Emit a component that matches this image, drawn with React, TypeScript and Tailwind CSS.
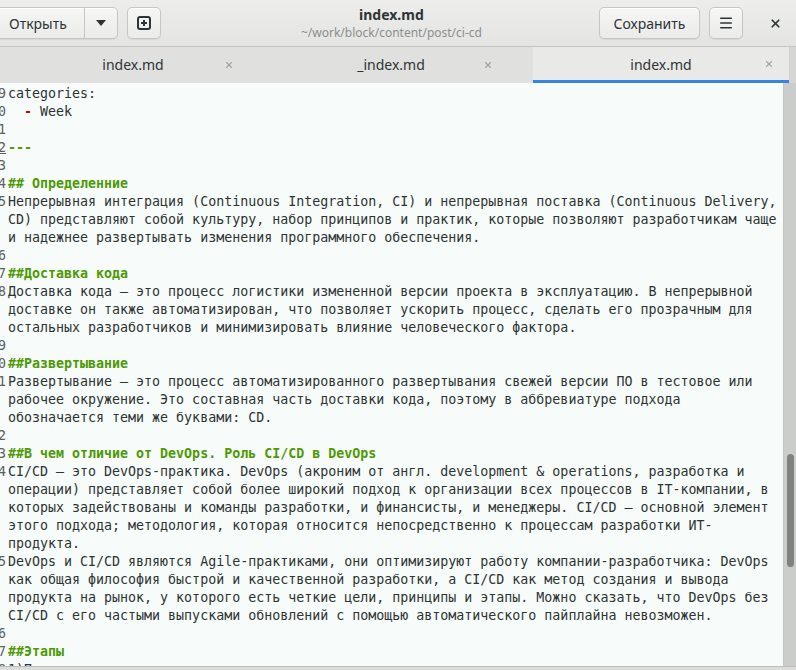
import { X, Menu } from 'lucide-react';

type Kind = 'text' | 'heading' | 'rule' | 'list';

type Line = { n: number; kind: Kind; rows: string[] };

const lines: Line[] = [
  { n: 29, kind: 'text', rows: ['categories:'] },
  { n: 30, kind: 'list', rows: ['Week'] },
  { n: 31, kind: 'text', rows: [''] },
  { n: 32, kind: 'rule', rows: ['---'] },
  { n: 33, kind: 'text', rows: [''] },
  { n: 34, kind: 'heading', rows: ['## Определенние'] },
  {
    n: 35,
    kind: 'text',
    rows: [
      'Непрерывная интеграция (Continuous Integration, CI) и непрерывная поставка (Continuous Delivery,',
      'CD) представляют собой культуру, набор принципов и практик, которые позволяют разработчикам чаще',
      'и надежнее развертывать изменения программного обеспечения.',
    ],
  },
  { n: 36, kind: 'text', rows: [''] },
  { n: 37, kind: 'heading', rows: ['##Доставка кода'] },
  {
    n: 38,
    kind: 'text',
    rows: [
      'Доставка кода — это процесс логистики измененной версии проекта в эксплуатацию. В непрерывной',
      'доставке он также автоматизирован, что позволяет ускорить процесс, сделать его прозрачным для',
      'остальных разработчиков и минимизировать влияние человеческого фактора.',
    ],
  },
  { n: 39, kind: 'text', rows: [''] },
  { n: 40, kind: 'heading', rows: ['##Развертывание'] },
  {
    n: 41,
    kind: 'text',
    rows: [
      'Развертывание — это процесс автоматизированного развертывания свежей версии ПО в тестовое или',
      'рабочее окружение. Это составная часть доставки кода, поэтому в аббревиатуре подхода',
      'обозначается теми же буквами: CD.',
    ],
  },
  { n: 42, kind: 'text', rows: [''] },
  { n: 43, kind: 'heading', rows: ['##В чем отличие от DevOps. Роль CI/CD в DevOps'] },
  {
    n: 44,
    kind: 'text',
    rows: [
      'CI/CD — это DevOps-практика. DevOps (акроним от англ. development & operations, разработка и',
      'операции) представляет собой более широкий подход к организации всех процессов в IT-компании, в',
      'которых задействованы и команды разработки, и финансисты, и менеджеры. CI/CD — основной элемент',
      'этого подхода; методология, которая относится непосредственно к процессам разработки ИТ-',
      'продукта.',
    ],
  },
  {
    n: 45,
    kind: 'text',
    rows: [
      'DevOps и CI/CD являются Agile-практиками, они оптимизируют работу компании-разработчика: DevOps',
      'как общая философия быстрой и качественной разработки, а CI/CD как метод создания и вывода',
      'продукта на рынок, у которого есть четкие цели, принципы и этапы. Можно сказать, что DevOps без',
      'CI/CD с его частыми выпусками обновлений с помощью автоматического пайплайна невозможен.',
    ],
  },
  { n: 46, kind: 'text', rows: [''] },
  { n: 47, kind: 'heading', rows: ['##Этапы'] },
  { n: 48, kind: 'text', rows: ['1)Планирование'] },
];

const tabs = [
  { label: 'index.md', pl: 'pl-[73px]', gap: 'ml-[31px]', w: 'w-[277px]', active: false },
  { label: '_index.md', pl: 'pl-[54px]', gap: 'ml-[32px]', w: 'w-[256px]', active: false },
  { label: 'index.md', pl: 'pl-[68px]', gap: 'ml-[43px]', w: 'w-[256px]', active: true },
];

const btn =
  'h-[32px] flex items-center border border-[#c6c6c4] bg-gradient-to-b from-[#f6f6f5] to-[#ebebea] shadow-[inset_0_1px_0_#ffffff,0_1px_1px_rgba(0,0,0,0.06)] text-[#2e3436]';

function RowText({ kind, text }: { kind: Kind; text: string }) {
  if (kind === 'heading' || kind === 'rule') {
    return <span className="font-bold text-[#4e9a06]">{text}</span>;
  }
  if (kind === 'list') {
    return (
      <span>
        {'  '}
        <span className="font-bold text-[#cc0000]">-</span>
        {' ' + text}
      </span>
    );
  }
  return <span>{text}</span>;
}

export default function App() {
  return (
    <div
      className="w-[796px] h-[670px] overflow-hidden flex flex-col bg-[#e4e4e2] text-[#2e3436]"
      style={{ fontFamily: '"Noto Sans", "Open Sans", sans-serif' }}
    >
      {/* header bar */}
      <div className="h-[47px] shrink-0 flex items-center pl-0 pr-[6px] border-b border-[#c4c4c2] bg-gradient-to-b from-[#ededec] to-[#e4e4e2]">
        <div className="flex -ml-[9px]">
          <button className={`${btn} rounded-l-[5px] pl-[17px] pr-[17px] text-[14px]`}>Открыть</button>
          <button className={`${btn} -ml-px rounded-r-[5px] w-[34px] justify-center`}>
            <svg width="10" height="6" viewBox="0 0 10 6">
              <path d="M0 0 L10 0 L5 6 Z" fill="#2e3436" />
            </svg>
          </button>
          <button className={`${btn} ml-[9px] rounded-[5px] w-[34px] justify-center`}>
            <svg width="14" height="14" viewBox="0 0 14 14" fill="none">
              <rect x="1" y="1" width="12" height="12" rx="2" stroke="#2e3436" strokeWidth="2" />
              <path d="M7 4 V10 M4 7 H10" stroke="#2e3436" strokeWidth="2" />
            </svg>
          </button>
        </div>
        <div className="flex-1 flex flex-col items-center pl-[23px] leading-none">
          <div className="text-[14px] font-bold text-[#2e3436]">index.md</div>
          <div className="text-[12px] text-[#8b8e8f] mt-[5px]">~/work/block/content/post/ci-cd</div>
        </div>
        <div className="flex items-center">
          <button className={`${btn} rounded-[5px] w-[101px] justify-center text-[14px]`}>Сохранить</button>
          <button className={`${btn} ml-[9px] rounded-[5px] w-[34px] justify-center`}>
            <Menu size={16} strokeWidth={2.2} color="#2e3436" />
          </button>
          <button className="ml-[17px] w-[30px] h-[32px] flex items-center justify-center">
            <X size={13} strokeWidth={3.2} color="#2e3436" />
          </button>
        </div>
      </div>

      {/* tabs */}
      <div className="h-[36px] shrink-0 flex bg-[#e0e0de]">
        {tabs.map((t, i) => (
          <div
            key={i}
            className={`${t.w} ${t.pl} flex items-center text-[14px] pb-[1px] ${
              t.active ? 'bg-[#e9e9e7] border-b-[3px] border-[#3584e4] pt-[2px]' : ''
            }`}
          >
            <span className="w-[120px] text-center">{t.label}</span>
            <span className={`${t.gap} w-[10px] flex justify-center`}>
              <X size={12} strokeWidth={2.6} color="#a3a4a2" />
            </span>
          </div>
        ))}
        <div className="flex-1 border-l border-[#cfcfcd] bg-[#d6d6d4]" />
      </div>

      {/* editor */}
      <div className="flex-1 min-h-0 flex">
        <div
          className="flex-1 overflow-hidden bg-[#f7fbf9] pt-[2px] text-[13.3px] leading-[18px] text-[#2e3436]"
          style={{ fontFamily: '"DejaVu Sans Mono", "Liberation Mono", monospace' }}
        >
          {lines.map((l) =>
            l.rows.map((r, j) => (
              <div key={`${l.n}-${j}`} className="flex h-[18px] whitespace-pre">
                <span
                  className={`w-[38px] -ml-[32px] shrink-0 text-right text-[#5c5f60] ${
                    l.n === 32 ? 'underline' : ''
                  }`}
                >
                  {j === 0 ? l.n : ''}
                </span>
                <span className="pl-[2px]">
                  <RowText kind={l.kind} text={r} />
                </span>
              </div>
            ))
          )}
        </div>
        <div className="w-[13px] shrink-0 bg-[#cbcdca] border-l border-[#c2c4c1]">
          <div className="mt-[371px] ml-[3px] w-[7px] h-[113px] rounded-full bg-[#7e8381]" />
        </div>
      </div>
      <div className="h-[4px] shrink-0 border-t border-[#bdbdbb] bg-[#dcdcda]" />
    </div>
  );
}
